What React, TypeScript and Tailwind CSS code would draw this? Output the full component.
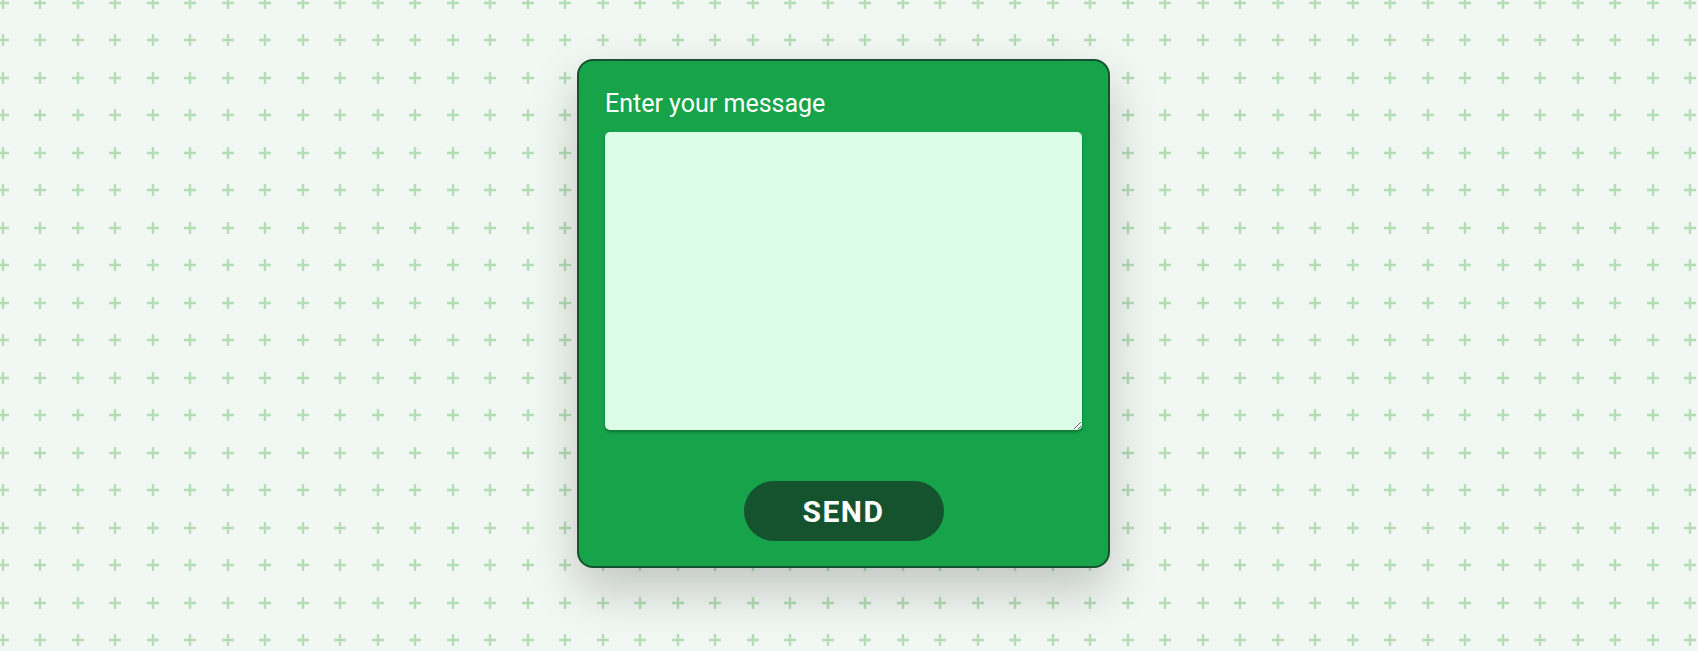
export default function App() {
  return (
    <div className="flex min-h-screen justify-center bg-[#f1f7f2] bg-[url('data:image/svg+xml,%3Csvg%20xmlns=%22http://www.w3.org/2000/svg%22%20width=%2275%22%20height=%2275%22%3E%3Cg%20stroke=%22%23b4dcb5%22%20stroke-width=%222.4%22%3E%3Cpath%20d=%22M19%2013v12M13%2019h12M56%2013v12M50%2019h12M19%2050v12M13%2056h12M56%2050v12M50%2056h12%22/%3E%3C/g%3E%3C/svg%3E')] bg-[length:75px_75px] bg-[position:-16.5px_-16.5px] pt-[59px] pr-[11px] font-['Roboto',sans-serif]">
      <form
        className="flex h-fit w-[533px] flex-col rounded-[16px] border-2 border-[#14532d] bg-[#16a34a] px-[26px] pt-[27px] pb-[25px] shadow-[0_22px_50px_rgba(0,0,0,0.2)]"
        onSubmit={(e) => e.preventDefault()}
      >
        <label htmlFor="message" className="text-[25px] leading-8 text-white">
          Enter your message
        </label>
        <textarea
          id="message"
          className="mt-3 block h-[298px] w-full rounded-[5px] bg-[#dcfce7] p-2 text-base text-gray-900 shadow-[0_2px_3px_rgba(0,0,0,0.3)] outline-none"
        />
        <button
          type="submit"
          className="mx-auto mt-[51px] h-[60px] w-[200px] rounded-full bg-[#14532d] text-[30px] font-bold tracking-wider text-white"
        >
          SEND
        </button>
      </form>
    </div>
  )
}
